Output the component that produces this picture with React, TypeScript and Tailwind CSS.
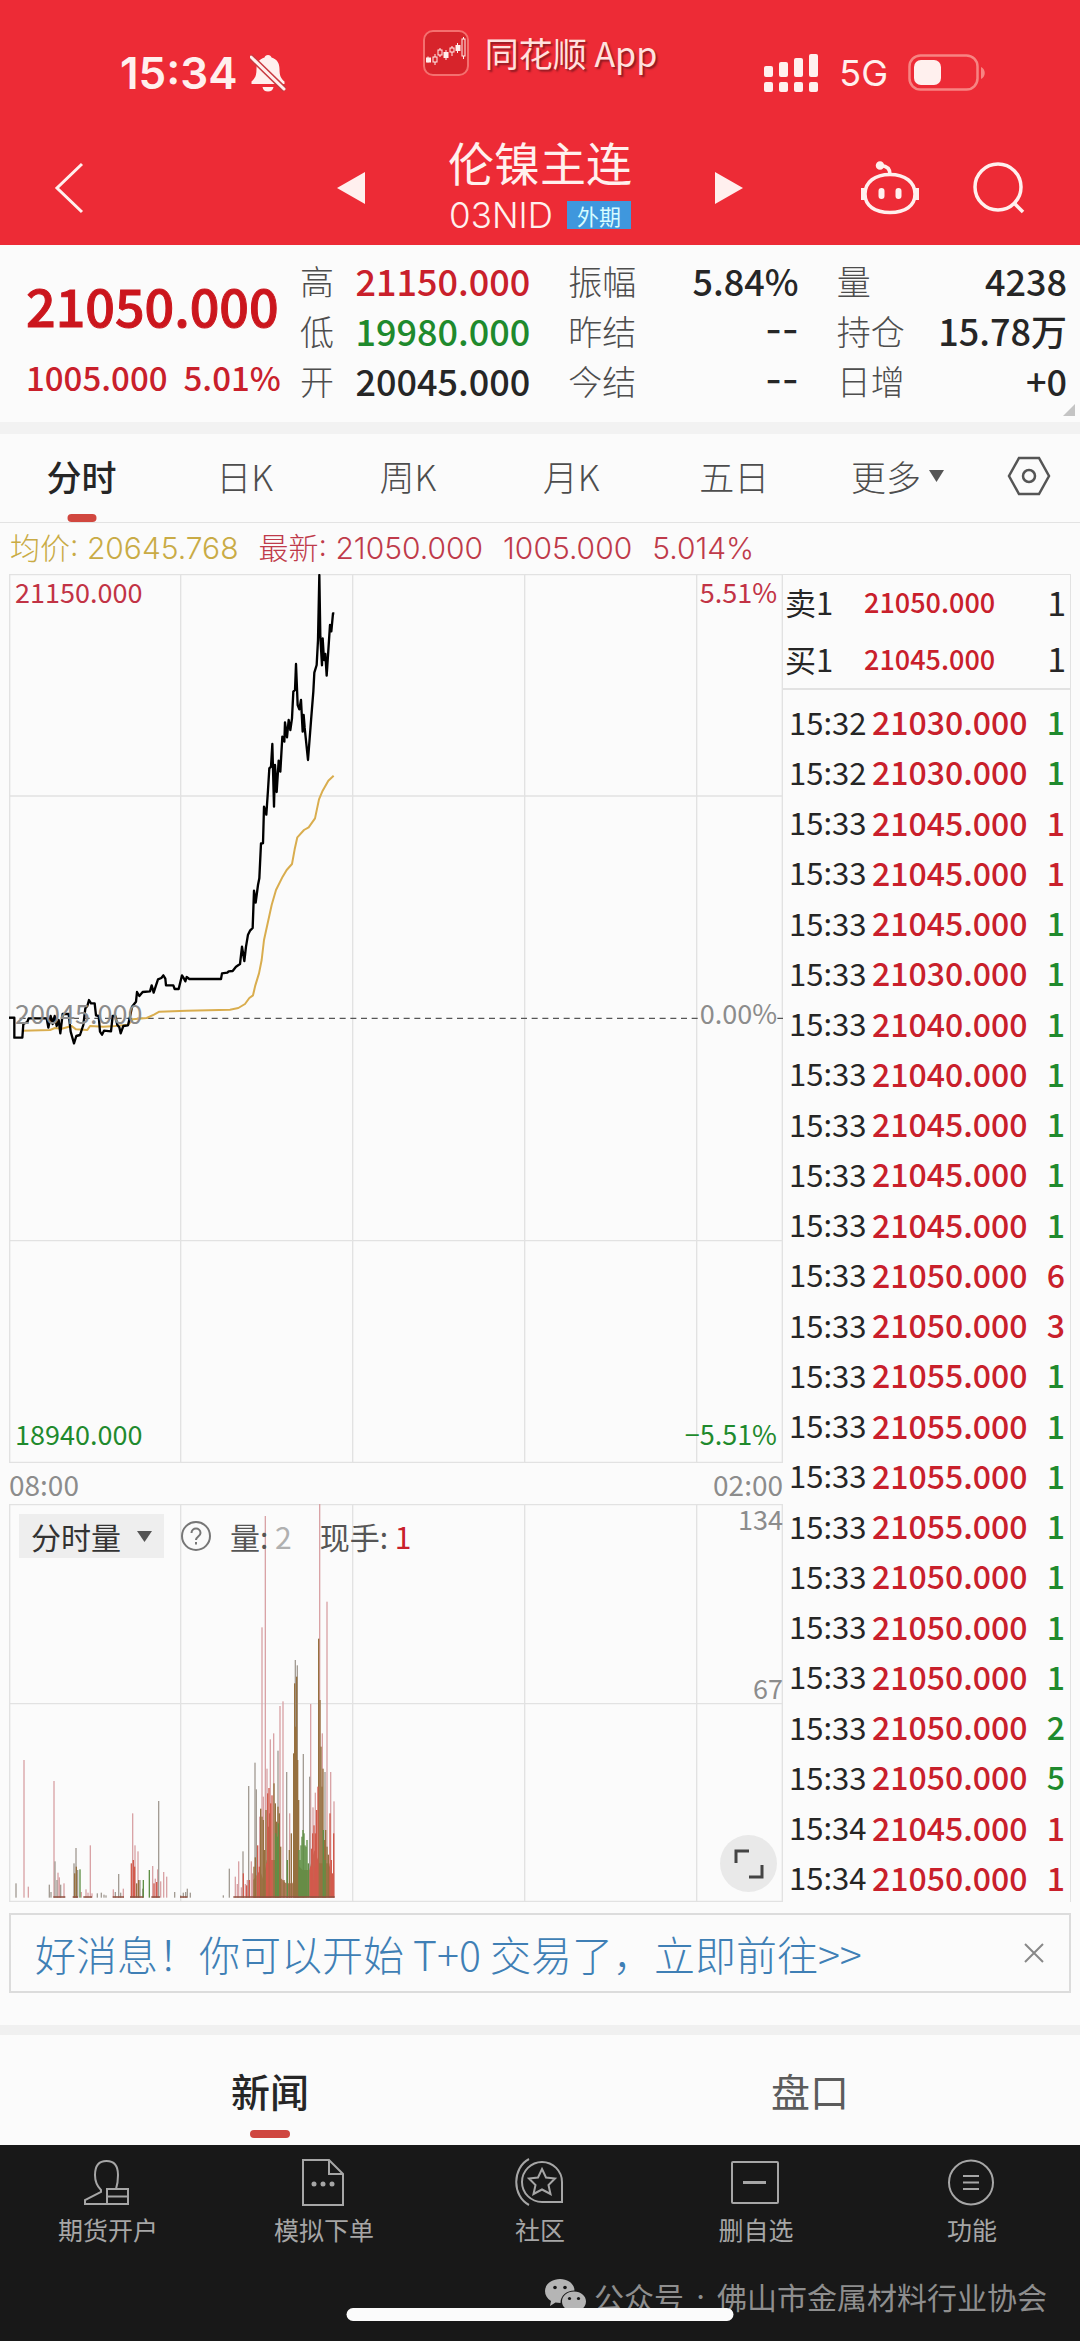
import { useState } from "react";

type Tone = "up" | "down" | "flat";

const TONES: Record<Tone, string> = {
  up: "text-[#c9202b]",
  down: "text-[#1f8a2d]",
  flat: "text-[#262626]",
};

const STATS: { label: string; value: string; tone: Tone }[][] = [
  [
    { label: "高", value: "21150.000", tone: "up" },
    { label: "低", value: "19980.000", tone: "down" },
    { label: "开", value: "20045.000", tone: "flat" },
  ],
  [
    { label: "振幅", value: "5.84%", tone: "flat" },
    { label: "昨结", value: "--", tone: "flat" },
    { label: "今结", value: "--", tone: "flat" },
  ],
  [
    { label: "量", value: "4238", tone: "flat" },
    { label: "持仓", value: "15.78万", tone: "flat" },
    { label: "日增", value: "+0", tone: "flat" },
  ],
];

const PERIODS = ["分时", "日K", "周K", "月K", "五日", "更多"];

const BOOK = [
  { side: "卖1", price: "21050.000", size: 1 },
  { side: "买1", price: "21045.000", size: 1 },
];

const TRADES: [string, string, number, Tone][] = [
  ["15:32", "21030.000", 1, "down"],
  ["15:32", "21030.000", 1, "down"],
  ["15:33", "21045.000", 1, "up"],
  ["15:33", "21045.000", 1, "up"],
  ["15:33", "21045.000", 1, "down"],
  ["15:33", "21030.000", 1, "down"],
  ["15:33", "21040.000", 1, "down"],
  ["15:33", "21040.000", 1, "down"],
  ["15:33", "21045.000", 1, "down"],
  ["15:33", "21045.000", 1, "down"],
  ["15:33", "21045.000", 1, "down"],
  ["15:33", "21050.000", 6, "up"],
  ["15:33", "21050.000", 3, "up"],
  ["15:33", "21055.000", 1, "down"],
  ["15:33", "21055.000", 1, "down"],
  ["15:33", "21055.000", 1, "down"],
  ["15:33", "21055.000", 1, "down"],
  ["15:33", "21050.000", 1, "down"],
  ["15:33", "21050.000", 1, "down"],
  ["15:33", "21050.000", 1, "down"],
  ["15:33", "21050.000", 2, "down"],
  ["15:33", "21050.000", 5, "down"],
  ["15:34", "21045.000", 1, "up"],
  ["15:34", "21050.000", 1, "up"],
];

const PRICE_LINE =
  "27,1373 43,1373 43,1433 67,1433 70,1392 82,1386 86,1375 140,1375 145,1403 152,1368 158,1392 164,1368 170,1398 176,1380 181,1420 188,1362 206,1362 212,1415 222,1450 229,1428 240,1425 250,1395 256,1345 262,1338 267,1320 273,1330 284,1330 288,1366 296,1368 300,1415 306,1424 312,1412 333,1414 338,1368 346,1368 352,1395 358,1402 362,1420 370,1398 384,1396 390,1370 396,1340 408,1325 411,1296 418,1308 428,1296 450,1294 455,1276 461,1298 468,1276 474,1258 484,1254 490,1246 496,1256 498,1276 520,1276 524,1287 536,1287 546,1246 552,1256 556,1264 560,1251 568,1257 663,1257 666,1240 682,1238 686,1234 698,1233 708,1220 720,1212 726,1160 733,1203 738,1160 744,1124 750,1112 758,1104 762,992 767,1028 774,975 778,955 783,850 789,850 792,740 799,764 804,690 808,625 813,620 817,552 822,740 825,615 830,696 836,602 841,635 847,530 853,545 855,487 861,532 866,480 871,510 876,475 880,395 885,390 888,312 893,435 898,448 903,420 908,515 911,465 914,503 924,600 934,470 940,395 943,338 950,315 954,240 958,45 961,230 966,316 968,235 972,300 976,282 980,347 990,195 994,214 999,160 1003,160";

const AVERAGE_LINE =
  "68,1412 150,1410 165,1404 185,1406 215,1398 228,1408 262,1410 270,1398 310,1400 345,1398 385,1394 398,1378 440,1374 462,1364 478,1355 560,1352 690,1349 715,1344 735,1332 748,1314 759,1306 766,1276 777,1240 785,1200 792,1140 803,1090 815,1035 828,990 848,950 860,930 876,912 884,868 892,832 912,810 926,802 945,775 957,718 968,692 985,662 1001,647";

// x position and top of each volume bar, grouped by fill
const VOLUME = {
  rose: [
    [72, 1080], [85, 1460], [162, 1143], [174, 1418], [178, 1432], [192, 1450], [244, 1476], [271, 1336],
    [258, 1468], [264, 1478], [276, 1480], [340, 1468], [370, 1466], [398, 1240], [405, 1336], [414, 1354],
    [458, 1398], [466, 1436], [473, 1408], [482, 1444], [491, 1416], [500, 1430], [706, 1430], [712, 1452],
    [716, 1384], [724, 1462], [736, 1452], [742, 1440], [754, 1384], [758, 1420], [786, 682], [796, 348],
    [801, 1106], [811, 1018], [821, 1000], [840, 918], [849, 904], [869, 1240], [932, 912], [939, 1222],
    [946, 1178], [959, 312], [967, 1000], [981, 605], [992, 1116], [1002, 1204], [790, 1190], [779, 1250],
  ],
  slate: [
    [48, 1450], [148, 1454], [153, 1476], [165, 1384], [171, 1440], [182, 1454], [222, 1390], [228, 1344],
    [233, 1410], [292, 1480], [304, 1478], [312, 1484], [318, 1486], [346, 1476], [356, 1422], [362, 1478],
    [420, 1440], [428, 1466], [476, 1203], [524, 1476], [542, 1486], [550, 1478], [557, 1476], [562, 1466],
    [571, 1478], [670, 1486], [688, 1406], [729, 1354], [746, 1158], [765, 1088], [769, 1168], [834, 1052],
    [860, 1116], [910, 1062], [929, 1130], [975, 1116], [886, 780], [892, 796],
  ],
  brick: [
    [394, 1390], [400, 1380], [404, 1400], [462, 1450], [470, 1446], [730, 1420], [740, 1456], [748, 1440],
    [773, 1336], [778, 1400], [803, 1180], [807, 1164], [812, 1210], [816, 1186], [800, 1390], [935, 1346],
    [938, 1300], [942, 1276], [946, 1300], [950, 1230], [954, 1160], [932, 1400], [990, 1240], [994, 1380],
    [998, 1420], [1001, 1300], [951, 1380], [936, 1420], [941, 1440], [945, 1400],
  ],
  olive: [
    [224, 1420], [229, 1400], [410, 1450], [416, 1440], [762, 1400], [766, 1372], [782, 1226], [786, 1250],
    [790, 1260], [794, 1350], [798, 1230], [805, 1280], [809, 1240], [822, 1150], [826, 1210], [830, 1265],
    [834, 1220], [838, 1240], [842, 1340], [852, 1440], [868, 1350], [874, 1300], [881, 1060], [884, 850],
    [887, 980], [890, 830], [893, 1080], [896, 1200], [956, 716], [960, 900], [963, 1040], [966, 1160],
    [969, 1106], [973, 1320], [977, 1290], [981, 1340], [985, 1364], [988, 1400],
  ],
  green: [
    [240, 1408], [430, 1440], [448, 1410], [827, 1300], [835, 1270], [832, 1310], [862, 1380], [897, 1350],
    [900, 1380], [903, 1336], [906, 1310], [909, 1290], [912, 1300], [915, 1336], [918, 1340], [921, 1320],
    [925, 1390], [970, 1290], [975, 1380],
  ],
};

const NAV = [
  { label: "期货开户", icon: <AccountIcon /> },
  { label: "模拟下单", icon: <OrderIcon /> },
  { label: "社区", icon: <CommunityIcon /> },
  { label: "删自选", icon: <RemoveIcon /> },
  { label: "功能", icon: <FunctionsIcon /> },
];

export default function App() {
  return (
    <div className="flex min-h-screen flex-col bg-[#fbfbfb] font-['Noto_Sans_CJK_SC',sans-serif] text-[#262626]">
      <Header />
      <Quote />
      <PeriodTabs />
      <div className="flex h-[51px] items-center gap-5 px-[10px] font-['Inter','Noto_Sans_CJK_SC',sans-serif] text-[30px] font-light whitespace-nowrap text-[#bf3a4a]">
        <span className="text-[#c9ab45]">均价: 20645.768</span>
        <span>最新: 21050.000</span>
        <span>1005.000</span>
        <span>5.014%</span>
      </div>
      <div className="flex px-[9px]">
        <div className="min-w-0 flex-1">
          <PriceChart />
          <div className="flex h-[41px] items-center justify-between text-[28px] text-[#8c8c8c]">
            <span>08:00</span>
            <span>02:00</span>
          </div>
          <VolumeChart />
        </div>
        <Ticks />
      </div>
      <Banner />
      <InfoTabs />
      <BottomNav />
    </div>
  );
}

function Header() {
  return (
    <header className="bg-[#ed2b36] pb-[3px] text-[#fff0ee]">
      <div className="grid h-[134px] grid-cols-3 items-center pt-3">
        <div className="flex items-center gap-3 pl-[120px]">
          <span className="font-['Inter'] text-[44px] leading-none font-semibold">15:34</span>
          <svg viewBox="0 0 36 38" className="h-[38px] w-9">
            <path
              d="M18 1c2 0 3 1 3.500 2.500C27 5 29.500 9.500 29.500 15c0 7 1.500 9.500 5 12.500V30H1.500v-2.500c3.500-3 5-5.500 5-12.500C6.500 9.500 9 5 14.500 3.500 15 2 16 1 18 1zM12.500 33h11c-.500 3-2.500 4.500-5.500 4.500s-5-1.500-5.500-4.500z"
              fill="currentColor"
            />
            <path d="M0 2l35 34" stroke="#c93a40" strokeWidth="6" />
            <path d="M1 3l33 32" stroke="currentColor" strokeWidth="3" strokeLinecap="round" />
          </svg>
        </div>
        <div className="flex items-center justify-center gap-4 pb-10">
          <svg viewBox="0 0 46 46" className="size-[46px]">
            <rect x="1" y="1" width="44" height="44" rx="9" fill="#d7242b" stroke="#f4706f" strokeWidth="2" />
            <g fill="#fff0ee" stroke="#fff0ee">
              <path d="M5 26.500v6M12 24v11M17 18v9M23 20v10M29 16v10M34.500 13v10M40.500 7v22" strokeWidth="1" />
              <rect x="3.500" y="28" width="4" height="4" />
              <rect x="21" y="22.500" width="4" height="5" />
              <rect x="33" y="15.500" width="4" height="5" />
              <g fill="#d7242b">
                <rect x="10" y="27" width="4" height="5" />
                <rect x="15" y="20" width="4" height="5" />
                <rect x="27" y="18" width="4" height="4" />
                <rect x="39" y="9" width="3" height="17" />
              </g>
            </g>
          </svg>
          <span className="text-[34px] leading-none whitespace-nowrap text-[#ffe1de] [text-shadow:2px_2px_2px_#8d1a22]">
            同花顺 App
          </span>
        </div>
        <div className="flex items-center justify-end gap-5 pr-[94px]">
          <svg viewBox="0 0 55 39" className="h-[39px] w-[55px]" fill="currentColor">
            <rect x="0" y="12" width="9" height="11" rx="2" />
            <rect x="15" y="8" width="9" height="15" rx="2" />
            <rect x="30" y="4" width="9" height="19" rx="2" />
            <rect x="45" y="0" width="9" height="23" rx="2" />
            <rect x="0" y="28" width="9" height="10" rx="2" />
            <rect x="15" y="28" width="9" height="10" rx="2" />
            <rect x="30" y="28" width="9" height="10" rx="2" />
            <rect x="45" y="28" width="9" height="10" rx="2" />
          </svg>
          <span className="font-['Inter'] text-[36px] leading-none">5G</span>
          <svg viewBox="0 0 78 38" className="h-[38px] w-[78px]">
            <rect x="1.500" y="1.500" width="68" height="34" rx="11" fill="none" stroke="#f78482" strokeWidth="2.500" />
            <rect x="6" y="6" width="27" height="25" rx="7" fill="currentColor" />
            <path d="M73 13c5 2 5 10 0 12z" fill="#f78482" />
          </svg>
        </div>
      </div>

      <div className="grid h-[108px] grid-cols-[1fr_auto_1fr] items-center">
        <button aria-label="返回" className="justify-self-start pl-[54px]">
          <svg viewBox="0 0 30 52" className="h-[52px] w-[30px]" fill="none" stroke="currentColor" strokeWidth="3">
            <path d="M28 2L3 26l25 24" />
          </svg>
        </button>
        <div className="flex items-center gap-[83px]">
          <button aria-label="上一个">
            <svg viewBox="0 0 28 32" className="h-8 w-7" fill="currentColor">
              <path d="M28 0v32L0 16z" />
            </svg>
          </button>
          <div className="flex flex-col items-center">
            <h1 className="text-[46px] leading-[54px]">伦镍主连</h1>
            <div className="flex h-[54px] items-center gap-[14px]">
              <span className="font-['Inter'] text-[35px] leading-none font-light">03NID</span>
              <span className="bg-[#3f97dd] px-[10px] text-[22px] leading-[28px] text-[#d5fbff]">外期</span>
            </div>
          </div>
          <button aria-label="下一个">
            <svg viewBox="0 0 28 32" className="h-8 w-7" fill="currentColor">
              <path d="M0 0v32l28-16z" />
            </svg>
          </button>
        </div>
        <div className="flex items-center justify-end gap-[54px] pr-[55px]">
          <button aria-label="助手">
            <svg viewBox="0 0 58 54" className="h-[54px] w-[58px]" fill="none" stroke="currentColor" strokeWidth="3.500">
              <path d="M29 13.500C44 13.500 54 21 54 33S44 51.500 29 51.500 4 45 4 33s10-19.500 25-19.500z" />
              <path d="M29 13c0-5-3-8-9-8.500" strokeLinecap="round" />
              <circle cx="19" cy="4.500" r="2.500" fill="currentColor" />
              <path d="M2 27v12M56 27v12" strokeWidth="4" />
              <path d="M20.500 30v5M37.500 30v5" strokeWidth="6" strokeLinecap="round" />
            </svg>
          </button>
          <button aria-label="搜索">
            <svg viewBox="0 0 52 52" className="size-[52px]" fill="none" stroke="currentColor" strokeWidth="3.500">
              <circle cx="25" cy="25" r="23" />
              <path d="M41 41l9 9" />
            </svg>
          </button>
        </div>
      </div>
    </header>
  );
}

function Quote() {
  return (
    <section className="relative flex border-b-[12px] border-[#f2f2f2] pt-[10px] pr-[13px] pb-[17px]">
      <div className="w-[300px] shrink-0 pl-[26px] whitespace-nowrap text-[#c9202b]">
        <p className="text-[52px] leading-[100px] font-medium text-[#cb161d] [-webkit-text-stroke:1px]">21050.000</p>
        <p className="flex gap-4 text-[33px] leading-[44px] font-medium">
          <span>1005.000</span>
          <span>5.01%</span>
        </p>
      </div>
      <div className="grid flex-1 grid-cols-3 gap-x-[38px]">
        {STATS.map((column) => (
          <dl key={column[0].label}>
            {column.map(({ label, value, tone }) => (
              <div key={label} className="flex h-[50px] items-center justify-between whitespace-nowrap">
                <dt className="text-[34px] font-light text-[#4d4d4d]">{label}</dt>
                <dd className={`text-[36px] font-medium ${value === "--" ? "font-['Inter']" : ""} ${TONES[tone]}`}>
                  {value}
                </dd>
              </div>
            ))}
          </dl>
        ))}
      </div>
      <svg viewBox="0 0 12 12" className="absolute right-[5px] bottom-[6px] size-3" fill="#c4c4c4">
        <path d="M12 0v12H0z" />
      </svg>
    </section>
  );
}

function PeriodTabs() {
  const [period, setPeriod] = useState("分时");

  return (
    <nav className="flex h-[89px] border-b border-[#e3e3e3] pr-[29px]">
      <div className="grid flex-1 grid-cols-6">
        {PERIODS.map((name) => (
          <button
            key={name}
            onClick={() => setPeriod(name)}
            className={`relative flex items-center justify-center gap-2 pb-1 text-[35px] ${
              name === period ? "font-medium text-[#262626]" : "font-light text-[#4d4d4d]"
            }`}
          >
            {name}
            {name === "更多" ? (
              <svg viewBox="0 0 15 12" className="h-3 w-[15px]" fill="#555">
                <path d="M0 0h15L7.500 12z" />
              </svg>
            ) : null}
            {name === period ? (
              <span className="absolute bottom-0 left-1/2 h-2 w-[29px] -translate-x-1/2 rounded-full bg-[#d1473f]" />
            ) : null}
          </button>
        ))}
      </div>
      <button aria-label="设置" className="ml-7 pb-1">
        <svg viewBox="0 0 44 40" className="h-10 w-11" fill="none" stroke="#555" strokeWidth="2.500">
          <path d="M12 2h20l10 18-10 18H12L2 20z" />
          <circle cx="22" cy="20" r="6" />
        </svg>
      </button>
    </nav>
  );
}

function PriceChart() {
  return (
    <div className="relative text-[27px] leading-[27px]">
      <svg viewBox="27 42 2322 2667" className="block w-full" fill="none">
        <g stroke="#e2e2e2" strokeWidth="4">
          <path d="M27 44H2349M27 708H2349M27 2042H2349M27 2707H2349" />
          <path d="M29 42V2709M542 42V2709M1058 42V2709M1574 42V2709M2090 42V2709M2347 42V2709" />
        </g>
        <path d="M27 1375H2100M2332 1375H2349" stroke="#555" strokeWidth="4" strokeDasharray="18 14" />
        <polyline points={AVERAGE_LINE} stroke="#d9ad4e" strokeWidth="6" strokeLinejoin="round" />
        <polyline points={PRICE_LINE} stroke="#000" strokeWidth="7" strokeLinejoin="round" />
      </svg>
      <div className="absolute inset-x-[6px] top-1 flex justify-between text-[#c23345]">
        <span>21150.000</span>
        <span>5.51%</span>
      </div>
      <div className="absolute inset-x-[6px] top-1/2 flex -translate-y-5 justify-between text-[#8c8c8c]">
        <span>20045.000</span>
        <span>0.00%</span>
      </div>
      <div className="absolute inset-x-[6px] bottom-4 flex justify-between text-[#1f8a2d]">
        <span>18940.000</span>
        <span>−5.51%</span>
      </div>
    </div>
  );
}

function VolumeBars({ bars, fill }: { bars: number[][]; fill: string }) {
  return (
    <g fill={fill}>
      {bars.map(([x, top]) => (
        <rect key={`${x}-${top}`} x={x - 2} y={top} width="4" height={1493 - top} />
      ))}
    </g>
  );
}

function VolumeChart() {
  return (
    <div className="relative text-[27px] leading-[30px]">
      <svg viewBox="27 312 2322 1194" className="block w-full">
        <g stroke="#e2e2e2" strokeWidth="4">
          <path d="M27 314H2349M27 911H2349M27 1504H2349" />
          <path d="M29 312V1506M542 312V1506M1058 312V1506M1574 312V1506M2090 312V1506M2347 312V1506" />
        </g>
        <VolumeBars bars={VOLUME.rose} fill="#d9a3a6" />
        <VolumeBars bars={VOLUME.slate} fill="#a39c94" />
        <path
          d="M760 1493V1440l20-30 10 30 10-60h30l8 50 20 20h20l10-60 20 20h20l15-60 15 40h30l10 60v40z"
          fill="#b0785a"
        />
        <VolumeBars bars={VOLUME.olive} fill="#96703f" />
        <VolumeBars bars={VOLUME.green} fill="#5f8f45" />
        <VolumeBars bars={VOLUME.brick} fill="#d25a4c" />
        <path
          d="M160 1491h36M218 1491h16M250 1491h26M338 1491h34M390 1491h40M454 1491h26M540 1491h22M700 1491h304"
          stroke="#8f5040"
          strokeWidth="4"
        />
      </svg>
      <div className="absolute top-[10px] left-[10px] flex items-center text-[30px] leading-[44px] text-[#555]">
        <button className="flex items-center gap-4 bg-[#eee] px-3 text-[#333]">
          分时量
          <svg viewBox="0 0 15 11" className="h-[11px] w-[15px]" fill="#555">
            <path d="M0 0h15L7.500 11z" />
          </svg>
        </button>
        <button aria-label="帮助" className="ml-[17px]">
          <svg viewBox="0 0 30 30" className="size-[30px]" fill="none" stroke="#777" strokeWidth="2">
            <circle cx="15" cy="15" r="14" />
            <path d="M10.500 12c0-6 9-6 9 0 0 3.500-4.500 3.500-4.500 7M15 21v2.500" />
          </svg>
        </button>
        <span className="ml-[19px]">
          量: <span className="text-[#b0b0b0]">2</span>
        </span>
        <span className="ml-7">
          现手: <span className="text-[#c9202b]">1</span>
        </span>
      </div>
      <span className="absolute top-0 right-0 text-[#8c8c8c]">134</span>
      <span className="absolute right-0 bottom-1/2 text-[#8c8c8c]">67</span>
      <button
        aria-label="全屏"
        className="absolute right-[6px] bottom-[10px] flex size-[57px] items-center justify-center rounded-full bg-[#e9e9e9]"
      >
        <svg viewBox="0 0 30 30" className="size-[30px]" fill="none" stroke="#444" strokeWidth="3">
          <path d="M2 14V2h13M28 16v12H15" />
        </svg>
      </button>
    </div>
  );
}

function Ticks() {
  return (
    <div className="flex w-[288px] shrink-0 flex-col border-t border-r border-[#e2e2e2] text-[#262626]">
      <table className="w-full border-b-2 border-[#e2e2e2]">
        <tbody>
          {BOOK.map(({ side, price, size }) => (
            <tr key={side} className="h-[57px]">
              <th scope="row" className="w-[81px] p-0 pb-1 pl-[2px] text-left text-[31px] leading-none font-normal">
                {side}
              </th>
              <td className={`p-0 pb-1 text-[27px] leading-none font-medium ${TONES.up}`}>{price}</td>
              <td className="p-0 pr-1 pb-1 text-right text-[34px] leading-none">{size}</td>
            </tr>
          ))}
        </tbody>
      </table>
      <table className="mt-[6px] w-full flex-1 text-[32px] leading-none">
        <tbody>
          {TRADES.map(([time, price, size, tone], i) => (
            <tr key={i} className="h-[50px]">
              <td className="w-[89px] p-0 pl-[6px] text-[31px]">{time}</td>
              <td className={`p-0 font-medium ${TONES.up}`}>{price}</td>
              <td className={`p-0 pr-[5px] text-right font-medium ${TONES[tone]}`}>{size}</td>
            </tr>
          ))}
        </tbody>
      </table>
    </div>
  );
}

function Banner() {
  const [open, setOpen] = useState(true);

  return (
    <div className="border-b-[10px] border-[#f0f0f0] px-[9px] pt-[11px] pb-8">
      {open ? (
        <div className="flex h-20 items-center justify-between border-2 border-[#dcdcdc] pr-[25px] pl-6">
          <a href="#trade" className="text-[41px] leading-none font-light whitespace-nowrap text-[#3f7fb5]">
            好消息！你可以开始 T+0 交易了，立即前往&gt;&gt;
          </a>
          <button aria-label="关闭" onClick={() => setOpen(false)}>
            <svg viewBox="0 0 20 20" className="size-5" stroke="#888" strokeWidth="2">
              <path d="M1 1l18 18M19 1L1 19" />
            </svg>
          </button>
        </div>
      ) : null}
    </div>
  );
}

function InfoTabs() {
  const [tab, setTab] = useState("新闻");

  return (
    <nav className="grid h-[110px] grid-cols-2">
      {["新闻", "盘口"].map((name) => (
        <button
          key={name}
          onClick={() => setTab(name)}
          className={`relative text-[39px] ${name === tab ? "font-medium text-[#262626]" : "text-[#5c5c5c]"}`}
        >
          {name}
          {name === tab ? (
            <span className="absolute bottom-[7px] left-1/2 h-2 w-10 -translate-x-1/2 rounded-full bg-[#cf4640]" />
          ) : null}
        </button>
      ))}
    </nav>
  );
}

function BottomNav() {
  return (
    <footer className="relative min-h-[190px] flex-1 bg-[#181818] pt-[13px] text-[#a6a6a6]">
      <nav className="grid grid-cols-5">
        {NAV.map(({ label, icon }) => (
          <a key={label} href={`#${label}`} className="flex flex-col items-center text-[25px] leading-[42px]">
            {icon}
            {label}
          </a>
        ))}
      </nav>
      <div className="absolute right-[33px] bottom-6 flex items-center text-[30px] leading-[42px] whitespace-nowrap text-[#8e8e8e]">
        <svg viewBox="0 0 41 34" className="mr-2 h-[34px] w-[41px]">
          <path
            d="M15 0c8 0 14.500 5 14.500 11.500-8 0-14 5-14 12.500l-5-.500L5 27l1-5c-4-2.500-6-6-6-10C0 5 7 0 15 0z"
            fill="#b5b5b5"
          />
          <path
            d="M29 12.500c7 0 12 4.500 12 10 0 3.500-2 6.500-5 8.500l1 3.500-4-2.500c-9 2-16-3-16-9.500 0-5.500 5-10 12-10z"
            fill="#b5b5b5"
          />
          <g fill="#181818">
            <circle cx="10" cy="8.500" r="1.800" />
            <circle cx="20" cy="8.500" r="1.800" />
            <circle cx="24.500" cy="19.500" r="1.600" />
            <circle cx="33.500" cy="19.500" r="1.600" />
          </g>
        </svg>
        <span>公众号</span>
        <span className="w-[33px] text-center font-['Inter']">·</span>
        <span>佛山市金属材料行业协会</span>
      </div>
      <div className="absolute bottom-5 left-1/2 h-[13px] w-[387px] -translate-x-1/2 rounded-full bg-[#fbfbfb]" />
    </footer>
  );
}

function AccountIcon() {
  return (
    <svg viewBox="0 0 50 50" className="size-[50px]" fill="none" stroke="currentColor" strokeWidth="2">
      <path d="M24 46H2v-4l16-8v-2c-5-5-6-9-6-15C12 8 16 3 23.500 3S35 8 35 17c0 5 0 8-2 14" />
      <path d="M24 31h21v15H24zM24 38.500h21" />
    </svg>
  );
}

function OrderIcon() {
  return (
    <svg viewBox="0 0 50 50" className="size-[50px]" fill="none" stroke="currentColor" strokeWidth="2">
      <path d="M4 2h26l14 14v31H4zM30 2v14h14" />
      <g fill="currentColor" stroke="none">
        <circle cx="15" cy="26" r="2.500" />
        <circle cx="24" cy="26" r="2.500" />
        <circle cx="33" cy="26" r="2.500" />
      </g>
    </svg>
  );
}

function CommunityIcon() {
  return (
    <svg viewBox="0 0 50 50" className="size-[50px]" fill="none" stroke="currentColor" strokeWidth="2">
      <path d="M47 44H27a20 20 0 1 1 20-20z" />
      <path d="M14 1C-3 10-3 38 14 47" />
      <path d="M27 11l4 8.500 9 1-6.500 6.500 2 9-8.500-4.500-8.500 4.500 2-9L14 20.500l9-1z" />
    </svg>
  );
}

function RemoveIcon() {
  return (
    <svg viewBox="0 0 50 50" className="size-[50px]" fill="none" stroke="currentColor" strokeWidth="2">
      <rect x="1" y="4" width="46" height="41" rx="1" />
      <path d="M12 24.500h23" strokeWidth="3" />
    </svg>
  );
}

function FunctionsIcon() {
  return (
    <svg viewBox="0 0 50 50" className="size-[50px]" fill="none" stroke="currentColor" strokeWidth="2">
      <circle cx="24" cy="24.500" r="22" />
      <path d="M16 18h16M16 24.500h16M16 31h16" />
    </svg>
  );
}
